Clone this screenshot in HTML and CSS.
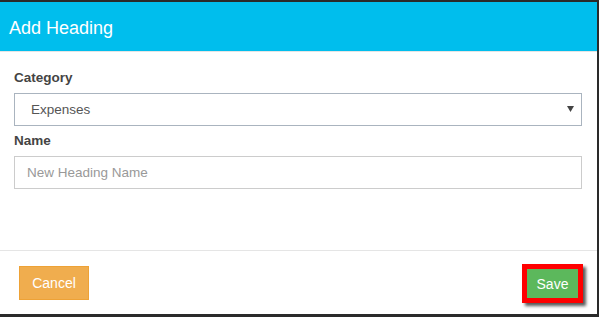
FILE: index.html
```html
<!DOCTYPE html>
<html lang="en">
<head>
    <meta charset="UTF-8">
    <title>Add Heading</title>
    <link rel="stylesheet" href="styles.css">
</head>
<body>
    <div class="modal">
        <div class="modal-header">
            <h4 class="modal-title">Add Heading</h4>
        </div>

        <div class="modal-body">
            <label class="campo-label">Category</label>
            <div class="select-wrap">
                <select class="campo">
                    <option>Expenses</option>
                </select>
                <svg class="select-seta" width="7" height="6" viewBox="0 0 7 6"><path d="M0 0H7L3.5 6Z" fill="#444"/></svg>
            </div>

            <label class="campo-label">Name</label>
            <input type="text" class="campo campo-texto" placeholder="New Heading Name">
        </div>

        <div class="modal-footer">
            <button class="btn btn-cancelar">Cancel</button>
            <button class="btn btn-salvar">Save</button>
        </div>
    </div>
</body>
</html>
```

FILE: styles.css
```css
body {
    margin: 0;
    padding: 0;
    background-color: #2a2a2a; /* fundo escuro atrás do modal */
    font-family: "Liberation Sans", Arial, sans-serif;
    height: 317px;
    overflow: hidden;
}
.modal {
    width: 597px;
    height: 312px;
    margin-top: 2px;
    background-color: #fff;
    display: flex;
    flex-direction: column;
}
.modal-header {
    height: 49px;
    background-color: #00beed; /* azul claro */
    border-bottom: 1px solid #e5e5e5;
    display: flex;
    align-items: center;
    padding: 0 9px;
}
.modal-title {
    margin: 0;
    color: #fff;
    font-size: 18px;
    font-weight: normal;
    padding-top: 3px;
}
.modal-body {
    flex: 1;
    padding: 16px 15px 0 14px;
}
.campo-label {
    display: block;
    font-size: 13.5px;
    font-weight: bold;
    color: #444;
    line-height: 20px;
    margin-bottom: 5px;
}
.select-wrap {
    position: relative;
    margin-bottom: 5px;
}
.campo {
    display: block;
    width: 100%;
    height: 33px;
    box-sizing: border-box;
    font-family: inherit;
    font-size: 13.5px;
    color: #555;
    background-color: #fff;
    border: 1px solid #ccc;
    border-radius: 0;
    outline: none;
}
select.campo {
    appearance: none;
    -webkit-appearance: none;
    border-color: #aab4bf;
    padding: 0 16px;
}
.select-seta {
    position: absolute; /* seta sobre o select */
    right: 8px;
    top: 13px;
}
.campo-texto {
    padding: 0 12px;
}
.campo-texto::placeholder {
    color: #999;
}
.modal-footer {
    border-top: 1px solid #e5e5e5;
    padding: 15px 14px 14px 19px;
    display: flex;
    justify-content: space-between;
    align-items: flex-start;
}
.btn {
    font-family: inherit;
    font-size: 14px;
    color: #fff;
    cursor: pointer;
    border-radius: 0;
}
.btn-cancelar {
    width: 70px;
    height: 34px;
    background-color: #f0ad4e; /* laranja */
    border: 1px solid #eea236;
}
.btn-salvar {
    width: 61px;
    height: 39px;
    padding: 0;
    margin: -2px 0 -3px;
    background-color: #5cb85c; /* verde */
    border: 5px solid #f00; /* destaque vermelho */
    box-shadow: 3px 3px 3px rgba(0, 0, 0, 0.65);
}
```
